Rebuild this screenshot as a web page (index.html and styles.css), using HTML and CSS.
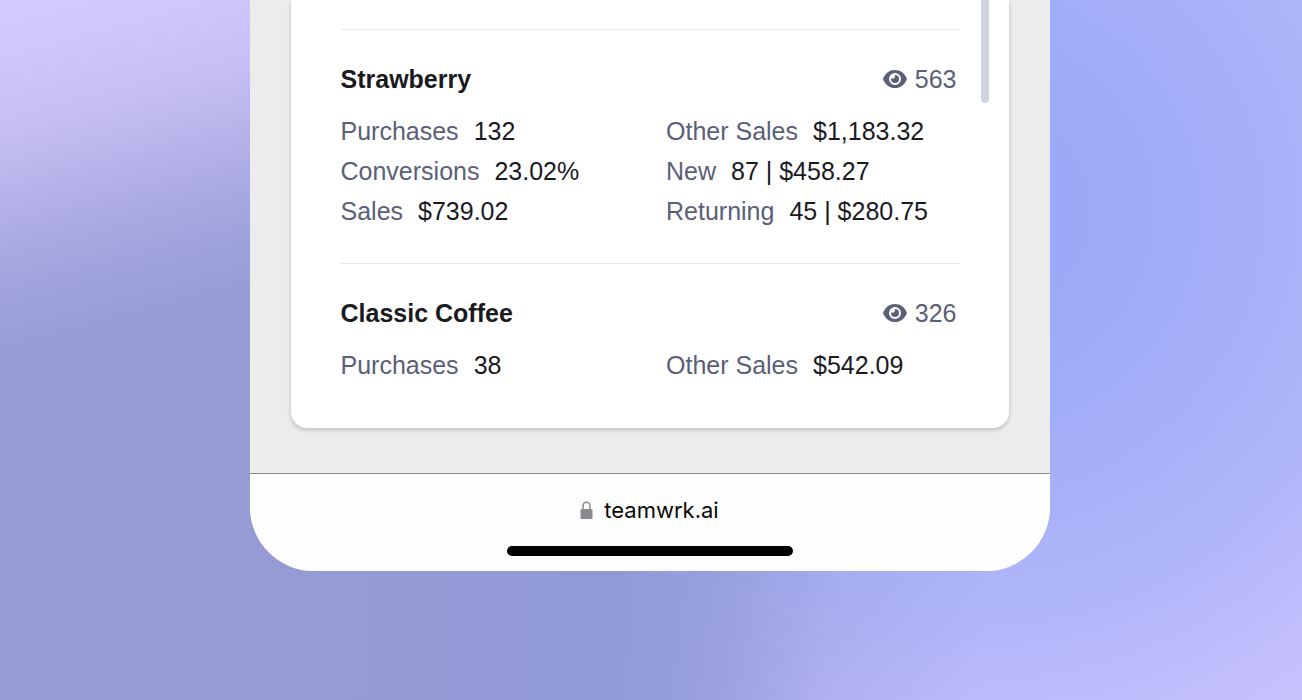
FILE: index.html
```html
<!doctype html>
<html lang="en">
  <head>
    <meta charset="utf-8">
    <meta name="viewport" content="width=device-width, initial-scale=1">
    <title>teamwrk.ai</title>
    <link rel="stylesheet" href="styles.css">
  </head>
  <body>
    <svg class="sprite" width="0" height="0" aria-hidden="true">
      <symbol id="eye" viewBox="0 0 24 20">
        <path fill="currentColor" fill-rule="evenodd" d="M12 1C6.500 1 2.300 4.400.3 9.300a1.800 1.800 0 0 0 0 1.400C2.300 15.600 6.500 19 12 19s9.700-3.400 11.700-8.300a1.800 1.800 0 0 0 0-1.400C21.700 4.400 17.500 1 12 1zM12 4a6 6 0 1 1 0 12a6 6 0 1 1 0-12z"/>
        <path fill="currentColor" d="M12 6a4 4 0 1 1-4 4l0-.7c.5.300 1 .4 1.500.4a2.300 2.300 0 0 0 2.100-3.600z"/>
      </symbol>
    </svg>

    <div class="phone">
      <main class="screen">
        <div class="card">
          <div class="scrollbar"></div>

          <section class="product">
            <div class="product-head">
              <h2>Strawberry</h2>
              <span class="views"><svg class="eye"><use href="#eye"/></svg>563</span>
            </div>
            <dl class="stats">
              <div><dt>Purchases</dt><dd>132</dd></div>
              <div><dt>Other Sales</dt><dd>$1,183.32</dd></div>
              <div><dt>Conversions</dt><dd>23.02%</dd></div>
              <div><dt>New</dt><dd>87 | $458.27</dd></div>
              <div><dt>Sales</dt><dd>$739.02</dd></div>
              <div><dt>Returning</dt><dd>45 | $280.75</dd></div>
            </dl>
          </section>

          <section class="product">
            <div class="product-head">
              <h2>Classic Coffee</h2>
              <span class="views"><svg class="eye"><use href="#eye"/></svg>326</span>
            </div>
            <dl class="stats">
              <div><dt>Purchases</dt><dd>38</dd></div>
              <div><dt>Other Sales</dt><dd>$542.09</dd></div>
            </dl>
          </section>
        </div>
      </main>

      <footer class="browser-bar">
        <button class="address" type="button">
          <svg class="lock" viewBox="0 0 13 18" aria-hidden="true">
            <path d="M3 8.500V5a3.500 3.800 0 0 1 7 0v3.500" fill="none" stroke="#8a8a8e" stroke-width="1.500"/>
            <rect x="0.500" y="8" width="12" height="10" rx="1.500" fill="#8a8a8e"/>
          </svg>
          teamwrk.ai
        </button>
        <div class="home-indicator"></div>
      </footer>
    </div>
  </body>
</html>
```

FILE: styles.css
```css
* {
  box-sizing: border-box;
}

body {
  margin: 0;
  padding-right: 3px;
  min-height: 100vh;
  font-family: "Liberation Sans", Helvetica, Arial, sans-serif;
  font-size: 25px;
  line-height: 40px;
  color: #1a1a1f;
  /* lilac corner, slate left side, blue glow behind the phone */
  background:
    linear-gradient(165deg, #d4cbff 0, #cec5fb 70px, #c6bff4 125px, #b6b3ea 190px, #a9a8e0 245px, #9ea2db 295px, rgba(151, 156, 214, 0.9) 350px, rgba(149, 154, 213, 0) 420px) left top / 50% 100% no-repeat,
    linear-gradient(92deg, #979bd5 0, #959ad5 30%, #9199d8 48%, rgba(145, 153, 216, 0.8) 56%, rgba(145, 153, 216, 0.3) 65%, rgba(145, 153, 216, 0) 76%),
    radial-gradient(circle at 75% 30%, #9ca9f9 0, #9daaf8 140px, #a3aef7 240px, #abb3f9 340px, #b2b7fa 420px, #bebcfc 500px, #cac4fc 610px);
}

.sprite {
  position: absolute;
}

.phone {
  width: 100%;
  max-width: 800px;
  margin: 0 auto;
  border-radius: 0 0 64px 64px;
  overflow: hidden;
  background: #ececec;
}

.screen {
  padding: 0 41px 45px;
}

.card {
  position: relative;
  padding: 29px 49px 43px 50px;
  border-radius: 0 0 16px 16px;
  background: #fff;
  box-shadow: 0 2px 4px rgba(0, 0, 0, 0.2);
}

.scrollbar {
  position: absolute;
  top: 0;
  right: 20px;
  width: 8px;
  height: 103px;
  border-radius: 0 0 4px 4px;
  background: #d0d4dc;
}

.product {
  padding: 29px 0 32px;
  border-top: 1px solid #e6e7eb;
}

.product:last-child {
  padding-bottom: 0;
}

.product-head {
  display: flex;
  justify-content: space-between;
  margin-bottom: 12px;
  padding-right: 3px;
}

h2 {
  margin: 0;
  font-size: 25px;
  font-weight: bold;
}

.views {
  display: flex;
  align-items: center;
  gap: 8px;
  color: #5a6078;
}

.eye {
  width: 24px;
  height: 20px;
}

.stats {
  display: grid;
  grid-template-columns: 1fr 1fr;
  column-gap: 32px;
  margin: 0;
}

.stats div {
  display: flex;
  gap: 15px;
  white-space: nowrap;
}

dt {
  color: #5a6078;
}

dd {
  margin: 0;
}

.browser-bar {
  display: flex;
  flex-direction: column;
  align-items: center;
  padding: 16px 0 15px;
  border-top: 1px solid #8f8f92;
  background: #fdfdfd;
}

.address {
  display: flex;
  align-items: center;
  gap: 11px;
  padding: 0;
  border: 0;
  background: none;
  font-family: Inter, sans-serif;
  font-size: 22px;
  line-height: 40px;
  color: #0a0a0a;
}

.lock {
  width: 13px;
  height: 18px;
}

.home-indicator {
  width: 286px;
  height: 10px;
  margin-top: 16px;
  border-radius: 5px;
  background: #000;
}
```
